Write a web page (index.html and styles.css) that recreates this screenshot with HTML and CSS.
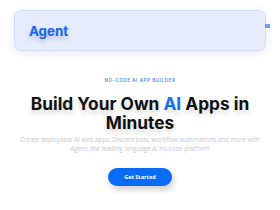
FILE: index.html
```html
<!DOCTYPE html>
<html lang="en">
<head>
<meta charset="utf-8">
<title>Agent</title>
<link rel="stylesheet" href="styles.css">
</head>
<body>
<header class="site-header">
  <nav class="nav-card">
    <span class="logo">Agent</span>
    <span class="menu-dot"></span>
  </nav>
</header>
<main class="hero">
  <p class="eyebrow">NO-CODE AI APP BUILDER</p>
  <h1 class="title">Build Your Own <span class="accent">AI</span> Apps in Minutes</h1>
  <p class="lead">Create deployable AI web apps, Discord bots, workflow automations and more with Agent, the leading language AI no-code platform</p>
  <a class="cta" href="#">Get Started</a>
</main>
</body>
</html>
```
FILE: styles.css
```css
* { box-sizing: border-box; }
html, body { margin: 0; padding: 0; background: #ffffff; }
body { width: 280px; height: 210px; overflow: hidden; font-family: "Inter", "Open Sans", sans-serif; }

.site-header { padding: 10px 14px 0; }
.nav-card {
  position: relative;
  height: 41px;
  display: flex;
  align-items: center;
  padding-left: 14px;
  background: #e6ecfd;
  border: 1px solid #d2def9;
  border-radius: 7px;
  box-shadow: 0 2px 10px rgba(120, 150, 220, 0.18);
}
.logo {
  font-family: "Inter", sans-serif;
  font-weight: 700;
  font-size: 13.3px;
  color: #1167ee;
  text-shadow: 0 3px 4px rgba(30, 50, 110, 0.25);
}
.menu-dot {
  position: absolute;
  right: -5px;
  top: 13px;
  width: 5px;
  height: 4px;
  background: #6ea2f3;
}

.hero {
  display: flex;
  flex-direction: column;
  align-items: center;
  text-align: center;
  padding-top: 27px;
}
.eyebrow {
  margin: 0;
  font-family: "Inter", sans-serif;
  font-weight: 600;
  font-size: 4.5px;
  letter-spacing: 0.6px;
  color: #4d8ef0;
}
.title {
  margin: 12px 0 0;
  width: 244px;
  font-family: "Inter", sans-serif;
  font-weight: 700;
  font-size: 17.3px;
  line-height: 18.5px;
  color: #111111;
  text-shadow: 0 4px 5px rgba(0, 0, 0, 0.15);
}
.accent { color: #1a6ff0; }
.lead {
  margin: 3px 0 0;
  width: 250px;
  font-family: "Open Sans", sans-serif;
  font-size: 6.2px;
  line-height: 9px;
  color: #c6c9d6;
}
.cta {
  margin-top: 15px;
  width: 64px;
  height: 18px;
  display: flex;
  align-items: center;
  justify-content: center;
  border-radius: 9px;
  background: #0a6cf5;
  color: #ffffff;
  font-family: "Open Sans", sans-serif;
  font-weight: 700;
  font-size: 5.5px;
  text-decoration: none;
  box-shadow: 2px 4px 6px rgba(0, 0, 0, 0.18);
}
```
